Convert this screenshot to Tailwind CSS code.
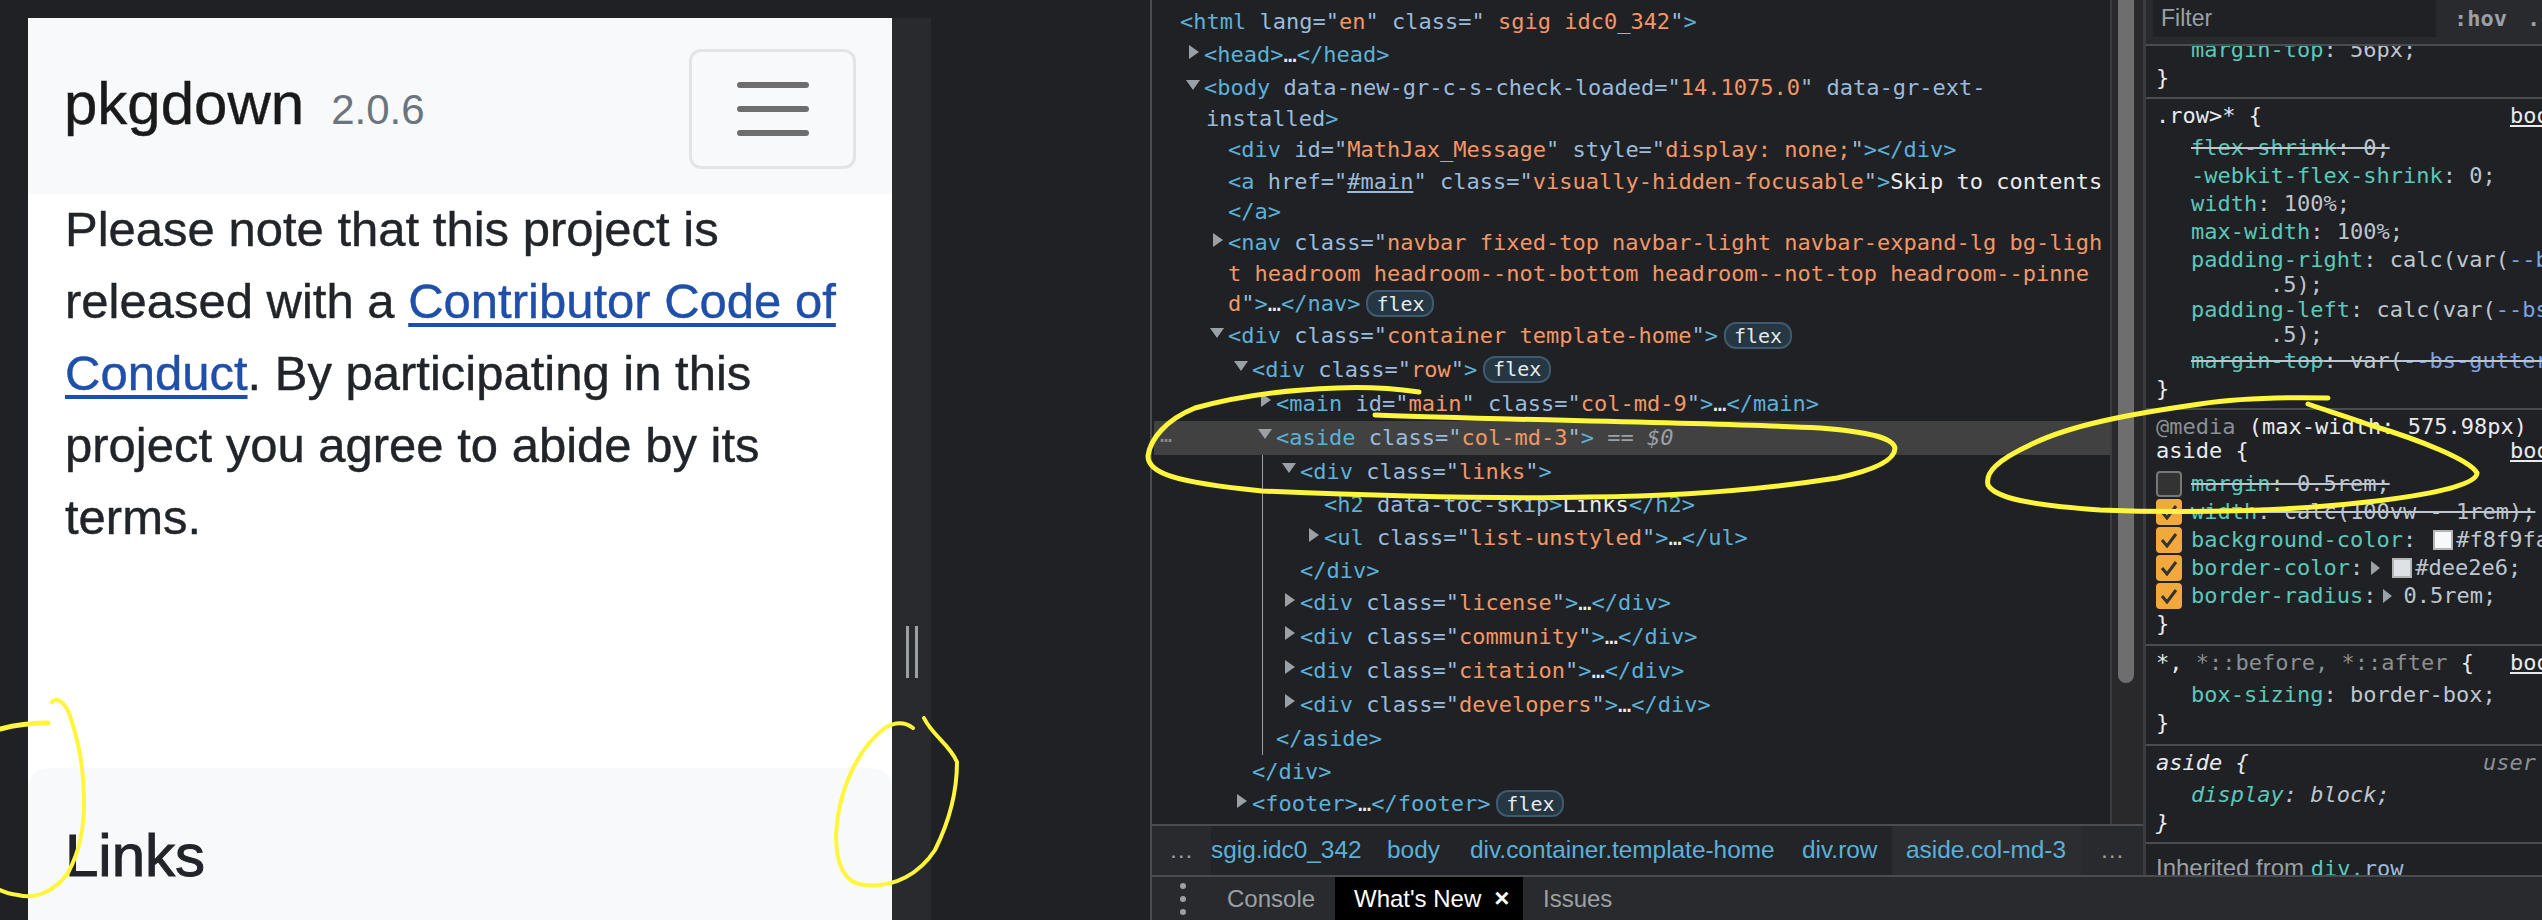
<!DOCTYPE html>
<html lang="en">
<head>
    <meta charset="UTF-8">
    <title>pkgdown devtools</title>
    <script src="https://cdn.jsdelivr.net/npm/@tailwindcss/browser@4"></script>
</head>
<body class="bg-[#202124]">
<div class="relative flex w-[2542px] h-[920px] overflow-hidden bg-[#202124]">

    <!-- phone preview -->
    <div class="w-[1150px] shrink-0 pt-[18px] pl-[28px] flex font-['Liberation_Sans']">
        <div class="w-[864px] h-[902px] bg-white flex flex-col">
            <nav class="h-[176px] shrink-0 bg-[#f8f9fa] pl-[36px] pr-[37px] flex items-center justify-between">
                <div class="flex items-baseline mt-[-4px]">
                    <span class="text-[60px] leading-[60px] text-[#1a1a1a] [-webkit-text-stroke:0.4px_#1a1a1a]">pkgdown</span>
                    <span class="text-[42px] leading-[42px] text-[#6c757d] ml-[27px]">2.0.6</span>
                </div>
                <button class="w-[167px] h-[120px] mr-[-1px] mt-[6px] border-[3px] border-[#e3e4e6] rounded-[12px] flex items-center justify-center">
                    <svg width="72" height="54" viewBox="0 0 72 54" fill="none" stroke="#6e6e6e" stroke-width="6" stroke-linecap="round">
                        <path d="M3 3H69"/><path d="M3 27H69"/><path d="M3 51H69"/>
                    </svg>
                </button>
            </nav>
            <p class="px-[37px] mt-[-1px] text-[49px] leading-[72px] text-[#212529] h-[575px] shrink-0 [-webkit-text-stroke:0.4px]">
                Please note that this project is released with a <a href="#" class="text-[#1f4fa8] underline decoration-[4px] underline-offset-[5px]">Contributor Code of Conduct</a>. By participating in this project you agree to abide by its terms.
            </p>
            <div class="flex-1 bg-[#f8f9fa] rounded-t-[20px] px-[37px] pt-[52px]">
                <h2 class="text-[60px] leading-[72px] text-[#212529] [-webkit-text-stroke:1px_#212529]">Links</h2>
            </div>
        </div>
        <div class="w-[39px] h-[902px] bg-[#292a2d] flex justify-center gap-[6px] pt-[608px]">
            <div class="w-[3px] h-[52px] bg-[#9aa0a6]"></div>
            <div class="w-[3px] h-[52px] bg-[#9aa0a6]"></div>
        </div>
    </div>

    <!-- devtools -->
    <div class="flex-1 flex flex-col font-['DejaVu_Sans_Mono'] text-[22px] text-[#5db0d7] whitespace-nowrap">
        <div class="flex h-[875px] shrink-0">

            <!-- elements -->
            <div class="w-[993px] shrink-0 flex flex-col border-l-2 border-[#494c50]">
                <div class="h-[826px] shrink-0 flex border-b-2 border-[#494c50]">
                    <div class="relative w-[958px] shrink-0 pt-[5px] overflow-hidden [&>div]:pb-[2px]">
                        <div class="h-[34px] pl-[28px] flex items-center"><span>&lt;html <span class="text-[#9bbbdc]">lang="</span><span class="text-[#f29766]">en</span><span class="text-[#9bbbdc]">" class="</span><span class="text-[#f29766]"> sgig idc0_342</span><span class="text-[#9bbbdc]">"</span>&gt;</span></div>
                        <div class="h-[33px] pl-[52px] flex items-center">
                            <svg class="ml-[-15px] mr-[5px] mt-[-6px]" width="10" height="14" viewBox="0 0 10 14" fill="#9aa0a6"><path d="M0 0L10 7L0 14Z"/></svg>
                            <span>&lt;head&gt;<span class="text-[#e8eaed]">…</span>&lt;/head&gt;</span>
                        </div>
                        <div class="h-[33px] pl-[52px] flex items-center">
                            <svg class="ml-[-18px] mr-[4px] mt-[-6px]" width="14" height="10" viewBox="0 0 14 10" fill="#9aa0a6"><path d="M0 0H14L7 10Z"/></svg>
                            <span>&lt;body <span class="text-[#9bbbdc]">data-new-gr-c-s-check-loaded="</span><span class="text-[#f29766]">14.1075.0</span><span class="text-[#9bbbdc]">" data-gr-ext-</span></span>
                        </div>
                        <div class="h-[29px] pl-[54px] flex items-center"><span class="text-[#9bbbdc]">installed<span class="text-[#5db0d7]">&gt;</span></span></div>
                        <div class="h-[33px] pl-[76px] flex items-center"><span>&lt;div <span class="text-[#9bbbdc]">id="</span><span class="text-[#f29766]">MathJax_Message</span><span class="text-[#9bbbdc]">" style="</span><span class="text-[#f29766]">display: none;</span><span class="text-[#9bbbdc]">"</span>&gt;&lt;/div&gt;</span></div>
                        <div class="h-[30px] pl-[76px] flex items-center"><span>&lt;a <span class="text-[#9bbbdc]">href="</span><span class="text-[#9bbbdc] underline">#main</span><span class="text-[#9bbbdc]">" class="</span><span class="text-[#f29766]">visually-hidden-focusable</span><span class="text-[#9bbbdc]">"</span>&gt;<span class="text-[#e8eaed]">Skip to contents</span></span></div>
                        <div class="h-[31px] pl-[76px] flex items-center"><span>&lt;/a&gt;</span></div>
                        <div class="h-[31px] pl-[76px] flex items-center">
                            <svg class="ml-[-15px] mr-[5px] mt-[-6px]" width="10" height="14" viewBox="0 0 10 14" fill="#9aa0a6"><path d="M0 0L10 7L0 14Z"/></svg>
                            <span>&lt;nav <span class="text-[#9bbbdc]">class="</span><span class="text-[#f29766]">navbar fixed-top navbar-light navbar-expand-lg bg-ligh</span></span>
                        </div>
                        <div class="h-[30px] pl-[76px] flex items-center"><span class="text-[#f29766]">t headroom headroom--not-bottom headroom--not-top headroom--pinne</span></div>
                        <div class="h-[31px] pl-[76px] flex items-center">
                            <span><span class="text-[#f29766]">d</span><span class="text-[#9bbbdc]">"</span>&gt;<span class="text-[#e8eaed]">…</span>&lt;/nav&gt;</span>
                            <span class="ml-[6px] w-[68px] h-[27px] rounded-[12px] border-2 border-[#3e5a6e] bg-[#253743] text-[#e8eaed] text-[20px] flex items-center justify-center">flex</span>
                        </div>
                        <div class="h-[33px] pl-[76px] flex items-center">
                            <svg class="ml-[-18px] mr-[4px] mt-[-6px]" width="14" height="10" viewBox="0 0 14 10" fill="#9aa0a6"><path d="M0 0H14L7 10Z"/></svg>
                            <span>&lt;div <span class="text-[#9bbbdc]">class="</span><span class="text-[#f29766]">container template-home</span><span class="text-[#9bbbdc]">"</span>&gt;</span>
                            <span class="ml-[6px] w-[68px] h-[27px] rounded-[12px] border-2 border-[#3e5a6e] bg-[#253743] text-[#e8eaed] text-[20px] flex items-center justify-center">flex</span>
                        </div>
                        <div class="h-[34px] pl-[100px] flex items-center">
                            <svg class="ml-[-18px] mr-[4px] mt-[-6px]" width="14" height="10" viewBox="0 0 14 10" fill="#9aa0a6"><path d="M0 0H14L7 10Z"/></svg>
                            <span>&lt;div <span class="text-[#9bbbdc]">class="</span><span class="text-[#f29766]">row</span><span class="text-[#9bbbdc]">"</span>&gt;</span>
                            <span class="ml-[6px] w-[68px] h-[27px] rounded-[12px] border-2 border-[#3e5a6e] bg-[#253743] text-[#e8eaed] text-[20px] flex items-center justify-center">flex</span>
                        </div>
                        <div class="h-[34px] pl-[124px] flex items-center">
                            <svg class="ml-[-15px] mr-[5px] mt-[-6px]" width="10" height="14" viewBox="0 0 10 14" fill="#9aa0a6"><path d="M0 0L10 7L0 14Z"/></svg>
                            <span>&lt;main <span class="text-[#9bbbdc]">id="</span><span class="text-[#f29766]">main</span><span class="text-[#9bbbdc]">" class="</span><span class="text-[#f29766]">col-md-9</span><span class="text-[#9bbbdc]">"</span>&gt;<span class="text-[#e8eaed]">…</span>&lt;/main&gt;</span>
                        </div>
                        <div class="h-[34px] pl-[122px] flex items-center bg-[#414141] ml-[2px]">
                            <span class="absolute left-[8px] text-[#8a8f95] text-[20px] mt-[-4px]">…</span>
                            <svg class="ml-[-18px] mr-[4px] mt-[-6px]" width="14" height="10" viewBox="0 0 14 10" fill="#9aa0a6"><path d="M0 0H14L7 10Z"/></svg>
                            <span>&lt;aside <span class="text-[#9bbbdc]">class="</span><span class="text-[#f29766]">col-md-3</span><span class="text-[#9bbbdc]">"</span>&gt; <span class="text-[#9aa0a6]">== <span class="italic">$0</span></span></span>
                        </div>
                        <div class="h-[34px] pl-[148px] flex items-center">
                            <svg class="ml-[-18px] mr-[4px] mt-[-6px]" width="14" height="10" viewBox="0 0 14 10" fill="#9aa0a6"><path d="M0 0H14L7 10Z"/></svg>
                            <span>&lt;div <span class="text-[#9bbbdc]">class="</span><span class="text-[#f29766]">links</span><span class="text-[#9bbbdc]">"</span>&gt;</span>
                        </div>
                        <div class="h-[33px] pl-[172px] flex items-center"><span>&lt;h2 <span class="text-[#9bbbdc]">data-toc-skip</span>&gt;<span class="text-[#e8eaed]">Links</span>&lt;/h2&gt;</span></div>
                        <div class="h-[33px] pl-[172px] flex items-center">
                            <svg class="ml-[-15px] mr-[5px] mt-[-6px]" width="10" height="14" viewBox="0 0 10 14" fill="#9aa0a6"><path d="M0 0L10 7L0 14Z"/></svg>
                            <span>&lt;ul <span class="text-[#9bbbdc]">class="</span><span class="text-[#f29766]">list-unstyled</span><span class="text-[#9bbbdc]">"</span>&gt;<span class="text-[#e8eaed]">…</span>&lt;/ul&gt;</span>
                        </div>
                        <div class="h-[32px] pl-[148px] flex items-center"><span>&lt;/div&gt;</span></div>
                        <div class="h-[33px] pl-[148px] flex items-center">
                            <svg class="ml-[-15px] mr-[5px] mt-[-6px]" width="10" height="14" viewBox="0 0 10 14" fill="#9aa0a6"><path d="M0 0L10 7L0 14Z"/></svg>
                            <span>&lt;div <span class="text-[#9bbbdc]">class="</span><span class="text-[#f29766]">license</span><span class="text-[#9bbbdc]">"</span>&gt;<span class="text-[#e8eaed]">…</span>&lt;/div&gt;</span>
                        </div>
                        <div class="h-[34px] pl-[148px] flex items-center">
                            <svg class="ml-[-15px] mr-[5px] mt-[-6px]" width="10" height="14" viewBox="0 0 10 14" fill="#9aa0a6"><path d="M0 0L10 7L0 14Z"/></svg>
                            <span>&lt;div <span class="text-[#9bbbdc]">class="</span><span class="text-[#f29766]">community</span><span class="text-[#9bbbdc]">"</span>&gt;<span class="text-[#e8eaed]">…</span>&lt;/div&gt;</span>
                        </div>
                        <div class="h-[34px] pl-[148px] flex items-center">
                            <svg class="ml-[-15px] mr-[5px] mt-[-6px]" width="10" height="14" viewBox="0 0 10 14" fill="#9aa0a6"><path d="M0 0L10 7L0 14Z"/></svg>
                            <span>&lt;div <span class="text-[#9bbbdc]">class="</span><span class="text-[#f29766]">citation</span><span class="text-[#9bbbdc]">"</span>&gt;<span class="text-[#e8eaed]">…</span>&lt;/div&gt;</span>
                        </div>
                        <div class="h-[34px] pl-[148px] flex items-center">
                            <svg class="ml-[-15px] mr-[5px] mt-[-6px]" width="10" height="14" viewBox="0 0 10 14" fill="#9aa0a6"><path d="M0 0L10 7L0 14Z"/></svg>
                            <span>&lt;div <span class="text-[#9bbbdc]">class="</span><span class="text-[#f29766]">developers</span><span class="text-[#9bbbdc]">"</span>&gt;<span class="text-[#e8eaed]">…</span>&lt;/div&gt;</span>
                        </div>
                        <div class="h-[34px] pl-[124px] flex items-center"><span>&lt;/aside&gt;</span></div>
                        <div class="h-[32px] pl-[100px] flex items-center"><span>&lt;/div&gt;</span></div>
                        <div class="h-[33px] pl-[100px] flex items-center">
                            <svg class="ml-[-15px] mr-[5px] mt-[-6px]" width="10" height="14" viewBox="0 0 10 14" fill="#9aa0a6"><path d="M0 0L10 7L0 14Z"/></svg>
                            <span>&lt;footer&gt;<span class="text-[#e8eaed]">…</span>&lt;/footer&gt;</span>
                            <span class="ml-[6px] w-[68px] h-[27px] rounded-[12px] border-2 border-[#3e5a6e] bg-[#253743] text-[#e8eaed] text-[20px] flex items-center justify-center">flex</span>
                        </div>
                        <!-- guide line of the selected node -->
                        <div class="absolute left-[110px] top-[455px] w-[1px] h-[300px] bg-[#9aa0a6]"></div>
                    </div>
                    <div class="w-[33px] shrink-0 border-l-2 border-[#3c3d3f] bg-[#29292b] pl-[6px]">
                        <div class="w-[16px] h-[683px] bg-[#6e6e6e] rounded-b-[8px]"></div>
                    </div>
                </div>
                <!-- breadcrumb -->
                <div class="flex-1 flex items-center bg-[#292a2d] font-['Liberation_Sans'] text-[24.4px] overflow-hidden">
                    <span class="w-[59px] shrink-0 pl-[17px] text-[#9aa0a6]">…</span>
                    <div class="w-[681px] h-full shrink-0 bg-[#232427] flex items-center">
                        <span class="text-[#5db0d7] w-[176px] shrink-0">sgig.idc0_342</span>
                        <span class="text-[#5db0d7] w-[83px] shrink-0">body</span>
                        <span class="text-[#5db0d7] w-[332px] shrink-0">div.container.template-home</span>
                        <span class="text-[#5db0d7]">div.row</span>
                    </div>
                    <div class="w-[190px] h-full shrink-0 bg-[#2c2d30] flex items-center pl-[14px] text-[#5db0d7]">aside.col-md-3</div>
                    <span class="pl-[18px] text-[#9aa0a6]">…</span>
                </div>
            </div>

            <!-- styles -->
            <div class="flex-1 border-l-[3px] border-[#3c3d3f] bg-[#202124] overflow-hidden text-[#bdc6cf]">
                <div class="h-[46px] bg-[#292a2d] border-b-2 border-[#494c50] flex pl-[7px] relative z-10">
                    <div class="w-[283px] h-[37px] bg-[#202124] pl-[8px] font-['Liberation_Sans'] text-[23px] text-[#9aa0a6] flex items-center">Filter</div>
                    <span class="ml-[18px] h-[37px] flex items-center text-[#9aa0a6] font-semibold">:hov</span>
                    <span class="ml-[20px] h-[37px] flex items-center text-[#9aa0a6] font-semibold">.cls</span>
                </div>

                <div class="h-[53px] border-b-2 border-[#494c50] leading-[28px] overflow-hidden">
                    <div class="pl-[45px] mt-[-10px] h-[28px]"><span class="text-[#5bc8b9]">margin-top</span>: 56px;</div>
                    <div class="pl-[10px] h-[28px] text-[#e8eaed]">}</div>
                </div>

                <div class="h-[311px] border-b-2 border-[#494c50] leading-[28px] pt-[3px]">
                    <div class="pl-[10px] h-[32px] flex text-[#e8eaed]"><span class="w-[354px] shrink-0">.row&gt;* {</span><span class="underline">bootstrap.min.css</span></div>
                    <div class="pl-[45px] h-[28px]"><span class="line-through"><span class="text-[#5bc8b9]">flex-shrink</span>: 0;</span></div>
                    <div class="pl-[45px] h-[28px]"><span class="text-[#5bc8b9]">-webkit-flex-shrink</span>: 0;</div>
                    <div class="pl-[45px] h-[28px]"><span class="text-[#5bc8b9]">width</span>: 100%;</div>
                    <div class="pl-[45px] h-[28px]"><span class="text-[#5bc8b9]">max-width</span>: 100%;</div>
                    <div class="pl-[45px] h-[28px]"><span class="text-[#5bc8b9]">padding-right</span>: calc(var(<span class="text-[#7ca3e8]">--bs-gutter-x</span>)</div>
                    <div class="pl-[124px] h-[22px] leading-[22px]">.5);</div>
                    <div class="pl-[45px] h-[28px]"><span class="text-[#5bc8b9]">padding-left</span>: calc(var(<span class="text-[#7ca3e8]">--bs-gutter-x</span>)</div>
                    <div class="pl-[124px] h-[23px] leading-[22px]">.5);</div>
                    <div class="pl-[45px] h-[28px]"><span class="line-through"><span class="text-[#5bc8b9]">margin-top</span>: var(<span class="text-[#7ca3e8]">--bs-gutter-y</span>);</span></div>
                    <div class="pl-[10px] h-[28px] text-[#e8eaed]">}</div>
                </div>

                <div class="h-[236px] border-b-2 border-[#494c50] leading-[28px] pt-[5px]">
                    <div class="pl-[10px] h-[24px] leading-[24px]"><span class="text-[#8a8f95]">@media</span> <span class="text-[#e8eaed]">(max-width: 575.98px)</span></div>
                    <div class="pl-[10px] h-[31px] leading-[24px] flex text-[#e8eaed]"><span class="w-[354px] shrink-0">aside {</span><span class="underline">bootstrap.min.css</span></div>
                    <div class="pl-[10px] h-[28px] flex items-center">
                        <span class="w-[26px] h-[26px] shrink-0 rounded-[4px] border-2 border-[#777] bg-[#333] mr-[9px]"></span>
                        <span class="line-through"><span class="text-[#5bc8b9]">margin</span>: 0.5rem;</span>
                    </div>
                    <div class="pl-[10px] h-[28px] flex items-center">
                        <span class="w-[26px] h-[26px] shrink-0 rounded-[4px] bg-[#f2a93b] mr-[9px] flex items-center justify-center"><svg width="18" height="16" viewBox="0 0 18 16" fill="none" stroke="#333" stroke-width="3"><path d="M2 8L7 14L16 2"/></svg></span>
                        <span class="line-through"><span class="text-[#5bc8b9]">width</span>: calc(100vw - 1rem);</span>
                    </div>
                    <div class="pl-[10px] h-[28px] flex items-center">
                        <span class="w-[26px] h-[26px] shrink-0 rounded-[4px] bg-[#f2a93b] mr-[9px] flex items-center justify-center"><svg width="18" height="16" viewBox="0 0 18 16" fill="none" stroke="#333" stroke-width="3"><path d="M2 8L7 14L16 2"/></svg></span>
                        <span class="text-[#5bc8b9]">background-color</span>:
                        <span class="w-[20px] h-[20px] shrink-0 bg-[#f8f9fa] border-2 border-[#b5b5b5] ml-[17px] mr-[3px]"></span>#f8f9fa;
                    </div>
                    <div class="pl-[10px] h-[28px] flex items-center">
                        <span class="w-[26px] h-[26px] shrink-0 rounded-[4px] bg-[#f2a93b] mr-[9px] flex items-center justify-center"><svg width="18" height="16" viewBox="0 0 18 16" fill="none" stroke="#333" stroke-width="3"><path d="M2 8L7 14L16 2"/></svg></span>
                        <span class="text-[#5bc8b9]">border-color</span>:
                        <svg class="ml-[8px] mr-[12px]" width="9" height="14" viewBox="0 0 9 14" fill="#9aa0a6"><path d="M0 0L9 7L0 14Z"/></svg>
                        <span class="w-[20px] h-[20px] shrink-0 bg-[#dee2e6] border-2 border-[#b5b5b5] mr-[3px]"></span>#dee2e6;
                    </div>
                    <div class="pl-[10px] h-[28px] flex items-center">
                        <span class="w-[26px] h-[26px] shrink-0 rounded-[4px] bg-[#f2a93b] mr-[9px] flex items-center justify-center"><svg width="18" height="16" viewBox="0 0 18 16" fill="none" stroke="#333" stroke-width="3"><path d="M2 8L7 14L16 2"/></svg></span>
                        <span class="text-[#5bc8b9]">border-radius</span>:
                        <svg class="ml-[7px] mr-[11px]" width="9" height="14" viewBox="0 0 9 14" fill="#9aa0a6"><path d="M0 0L9 7L0 14Z"/></svg>
                        0.5rem;
                    </div>
                    <div class="pl-[10px] h-[28px] text-[#e8eaed]">}</div>
                </div>

                <div class="h-[100px] border-b-2 border-[#494c50] leading-[28px] pt-[3px]">
                    <div class="pl-[10px] h-[32px] flex text-[#e8eaed]"><span class="w-[354px] shrink-0">*, <span class="text-[#8a8f95]">*::before, *::after</span> {</span><span class="underline">bootstrap.min.css</span></div>
                    <div class="pl-[45px] h-[28px]"><span class="text-[#5bc8b9]">box-sizing</span>: border-box;</div>
                    <div class="pl-[10px] h-[28px] text-[#e8eaed]">}</div>
                </div>

                <div class="h-[98px] border-b-2 border-[#494c50] leading-[28px] pt-[3px] italic">
                    <div class="pl-[10px] h-[32px] flex text-[#e8eaed]"><span class="w-[327px] shrink-0">aside {</span><span class="text-[#8a8f95]">user</span></div>
                    <div class="pl-[45px] h-[28px]"><span class="text-[#5bc8b9]">display</span>: block;</div>
                    <div class="pl-[10px] h-[28px] text-[#e8eaed]">}</div>
                </div>

                <div class="h-[31px] pt-[10px] pl-[10px] leading-[28px] overflow-hidden text-[#9aa0a6]"><span class="font-['Liberation_Sans'] text-[24px]">Inherited from </span><span class="text-[#5bc8b9]">div.</span><span class="text-[#9bbbdc]">row</span></div>
            </div>
        </div>

        <!-- drawer tabs -->
        <div class="flex-1 flex items-center bg-[#292a2d] border-t-2 border-[#494c50] border-l-2 font-['Liberation_Sans'] text-[24px] text-[#9aa0a6]">
            <div class="w-[30px] pl-[28px] shrink-0">
                <svg width="6" height="32" viewBox="0 0 6 32" fill="#9aa0a6"><circle cx="3" cy="3" r="3"/><circle cx="3" cy="16" r="3"/><circle cx="3" cy="29" r="3"/></svg>
            </div>
            <span class="ml-[45px] w-[108px]">Console</span>
            <div class="w-[188px] h-full bg-black text-white pl-[19px] flex items-center">What's New<span class="ml-[13px] text-[26px] font-bold">×</span></div>
            <span class="ml-[20px]">Issues</span>
        </div>
    </div>

    <!-- yellow marker scribbles over the screenshot -->
    <svg class="absolute left-0 top-0" width="2542" height="920" viewBox="0 0 2542 920" fill="none" stroke="#fdf63c" stroke-width="5" stroke-linecap="round">
        <path d="M0 729C15 725 32 723 48 723"/>
        <path d="M52 702C58 696 66 704 70 716C80 745 84 770 84 800C84 830 80 850 68 873C56 890 36 900 18 895C10 894 4 892 0 890" stroke-width="4"/>
        <path d="M913 728C905 722 895 722 885 728C858 748 838 790 836 835C836 865 845 884 865 885C895 888 920 873 935 850C950 820 957 790 957 762C950 745 932 735 924 718" stroke-width="4"/>
        <path d="M1419 392C1390 388 1360 387 1337 388C1280 390 1230 398 1195 408C1165 420 1150 440 1148 456C1148 472 1170 482 1262 491C1400 497 1500 499 1590 497C1680 496 1760 490 1837 478C1875 470 1895 460 1895 448C1893 438 1870 432 1820 428C1700 422 1500 420 1375 415" stroke-width="5"/>
        <path d="M2328 398C2280 397 2240 398 2200 404C2130 414 2070 425 2030 445C1998 460 1985 472 1988 485C1995 498 2030 505 2100 510C2200 514 2300 510 2367 502C2430 495 2477 485 2477 473C2470 460 2420 440 2370 425C2345 416 2325 410 2308 404" stroke-width="5"/>
    </svg>
</div>
</body>
</html>
